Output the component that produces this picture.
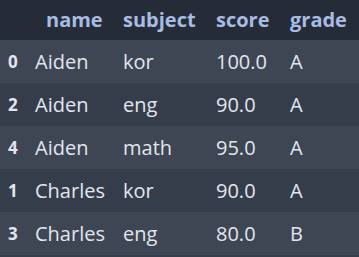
import React from 'react';

const rows = [
  { idx: 0, name: 'Aiden', subject: 'kor', score: '100.0', grade: 'A' },
  { idx: 2, name: 'Aiden', subject: 'eng', score: '90.0', grade: 'A' },
  { idx: 4, name: 'Aiden', subject: 'math', score: '95.0', grade: 'A' },
  { idx: 1, name: 'Charles', subject: 'kor', score: '90.0', grade: 'A' },
  { idx: 3, name: 'Charles', subject: 'eng', score: '80.0', grade: 'B' },
];

const cols = 'grid grid-cols-[35px_88px_93px_74px_1fr]';

const App = () => {
  return (
    <div className="w-[359px] h-[257px] overflow-hidden bg-[#363d4a] font-['Open_Sans',sans-serif]">
      {/* header */}
      <div className={`${cols} h-[40px] items-center bg-[#262c37] text-[20px] font-bold text-[#a8bce3]`}>
        <div />
        <div className="pl-[11px] leading-none">name</div>
        <div className="leading-none">subject</div>
        <div className="leading-none">score</div>
        <div className="leading-none">grade</div>
      </div>

      {/* body rows */}
      {rows.map((row, i) => (
        <div
          key={row.idx}
          className={`${cols} h-[43px] items-center text-[20px] text-[#e2e6ee] ${
            i % 2 === 0 ? 'bg-[#3e4553]' : 'bg-[#363d4a]'
          }`}
        >
          <div className="pl-[8px] text-[17px] font-bold leading-none">{row.idx}</div>
          <div className="leading-none">{row.name}</div>
          <div className="leading-none">{row.subject}</div>
          <div className="leading-none">{row.score}</div>
          <div className="leading-none">{row.grade}</div>
        </div>
      ))}
    </div>
  );
};

export default App;
